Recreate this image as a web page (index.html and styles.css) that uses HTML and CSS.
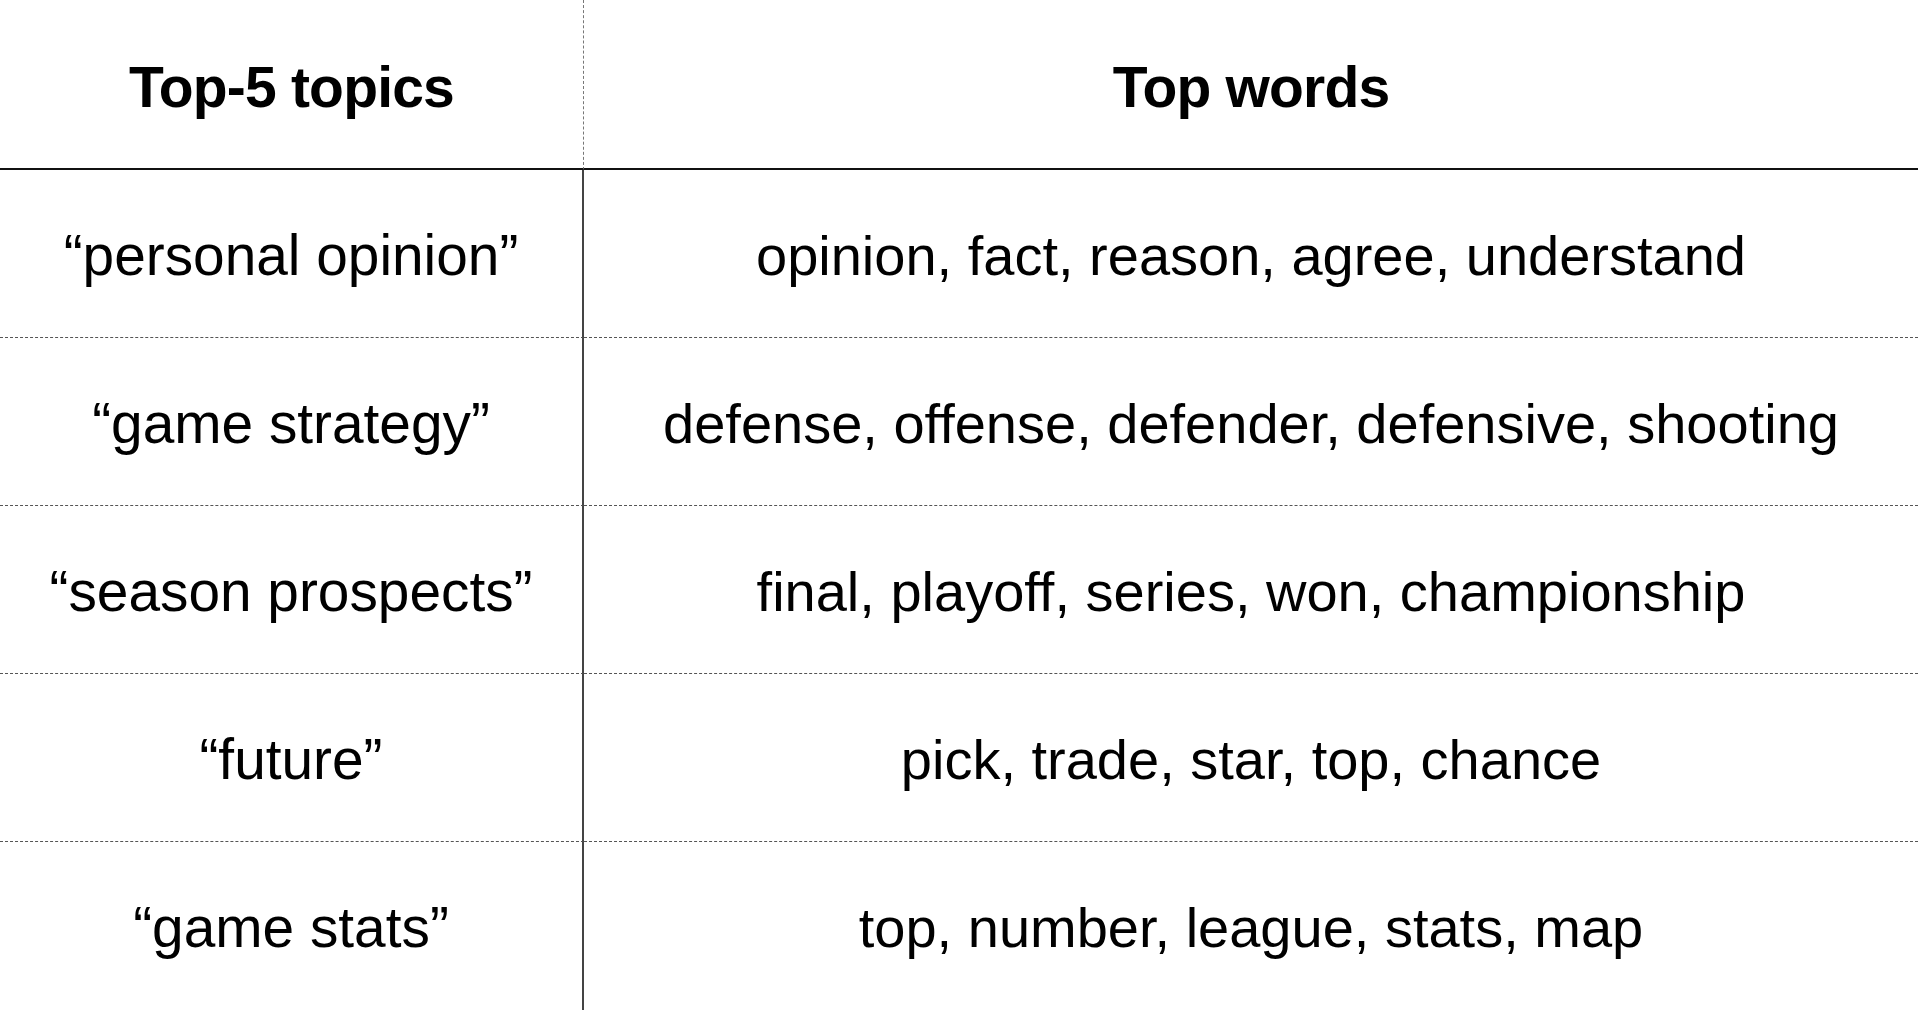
FILE: index.html
```html
<!DOCTYPE html>
<html>
<head>
<meta charset="utf-8">
<link rel="stylesheet" href="styles.css">
</head>
<body>
<div class="table">
  <div class="cell head left">Top-5 topics</div>
  <div class="cell head right">Top words</div>

  <div class="cell left row">“personal opinion”</div>
  <div class="cell right row">opinion, fact, reason, agree, understand</div>

  <div class="cell left row">“game strategy”</div>
  <div class="cell right row">defense, offense, defender, defensive, shooting</div>

  <div class="cell left row">“season prospects”</div>
  <div class="cell right row">final, playoff, series, won, championship</div>

  <div class="cell left row">“future”</div>
  <div class="cell right row">pick, trade, star, top, chance</div>

  <div class="cell left row last">“game stats”</div>
  <div class="cell right row last">top, number, league, stats, map</div>
</div>
</body>
</html>
```

FILE: styles.css
```css
html, body {
  margin: 0;
  padding: 0;
  background: #ffffff;
}

body {
  font-family: "Liberation Sans", Arial, Helvetica, sans-serif;
  color: #000;
  width: 1920px;
  height: 1013px;
  overflow: hidden;
}

.table {
  display: grid;
  grid-template-columns: 584px 1fr;
  grid-template-rows: 170px repeat(5, 168px);
  width: 1918px;
}

.cell {
  display: flex;
  align-items: center;
  justify-content: center;
  white-space: nowrap;
  box-sizing: border-box;
}

.head {
  font-weight: bold;
  font-size: 57px;
  letter-spacing: -0.8px;
  border-bottom: 2px solid #111;
  padding-top: 6px;
}

.head.left {
  border-right: 1px dashed #777;
}

.row {
  font-size: 56px;
  border-bottom: 1px dashed #555;
  padding-top: 3px;
}

.row.left {
  font-size: 56.8px;
  border-right: 2px solid #444;
}

.row.last {
  border-bottom: none;
}
```
